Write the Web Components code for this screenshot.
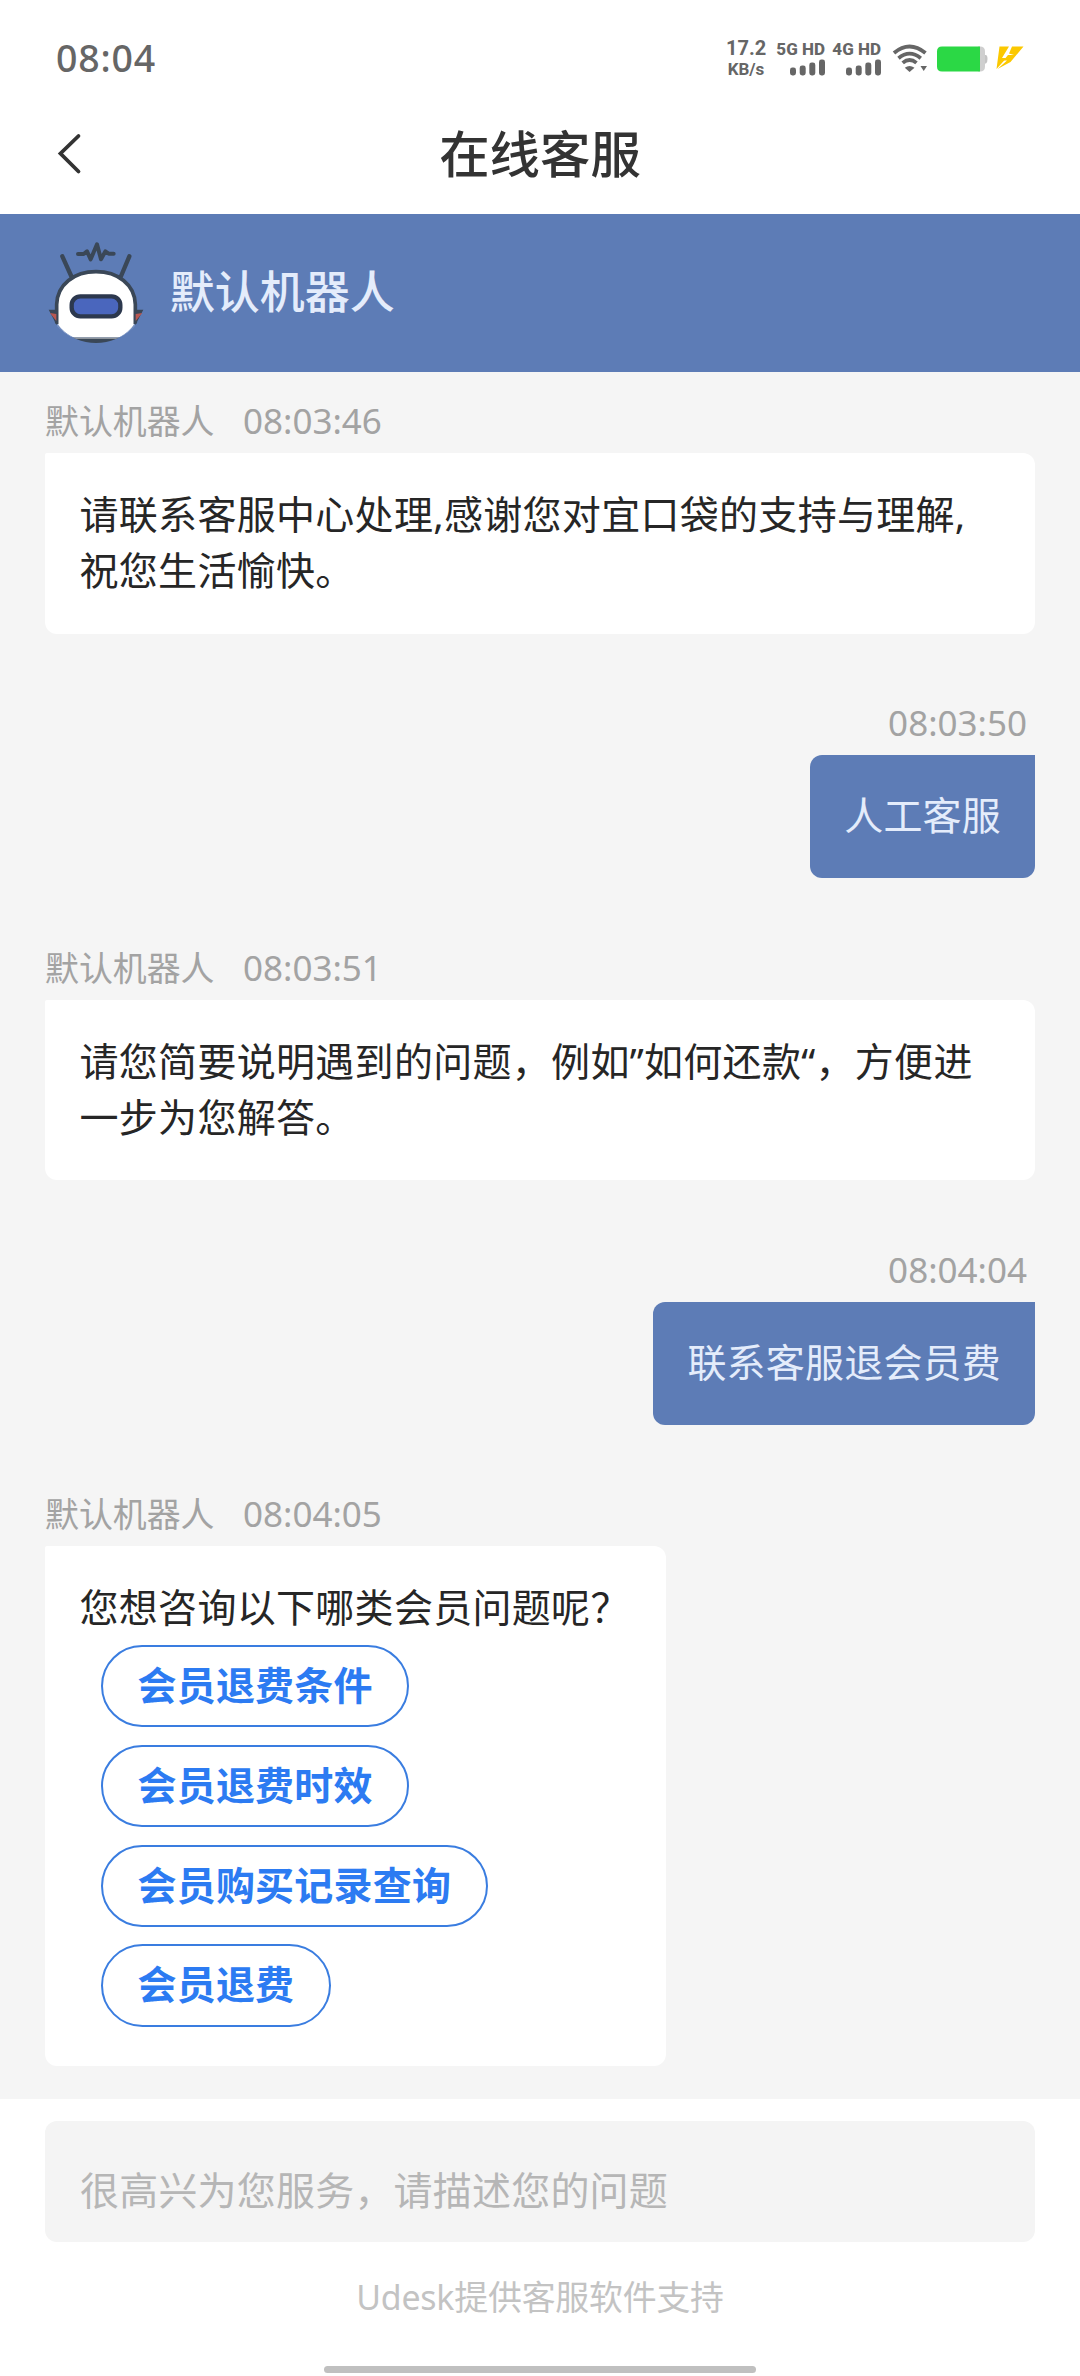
<!DOCTYPE html>
<html lang="zh-CN">
<head>
  <meta charset="UTF-8">
  <meta name="viewport" content="width=device-width, initial-scale=1.0">
  <title>在线客服</title>
  <style>
    body{
      margin: 0;
      font-family: "Noto Sans", "Noto Sans CJK SC", sans-serif;
      background-color: #fff;
    }
  </style>
</head>
<body>
  <template id="status-bar">
    <style>
      :host{
        display: flex;
        align-items: center;
        box-sizing: border-box;
        height: 96px;
        padding: 20px 56px 0 56px;
        color: #666;
      }
      .time{
        flex: 1;
        font-size: 37.5px;
        font-weight: 500;
        line-height: 38px;
        letter-spacing: 0.8px;
      }
      .speed{
        width: 40px;
        margin-right: 11px;
        font-family: Roboto, "Noto Sans", sans-serif;
        font-weight: 700;
        text-align: center;
      }
      .speed span{
        display: block;
        font-size: 20px;
        line-height: 22px;
      }
      .speed span + span{
        font-size: 17px;
        line-height: 20px;
      }
      .sim{
        display: flex;
        flex-direction: column;
        align-items: flex-end;
        width: 48px;
        margin-right: 8px;
        font-family: Roboto, "Noto Sans", sans-serif;
        font-size: 17px;
        font-weight: 800;
        line-height: 18px;
        white-space: nowrap;
      }
      svg{
        display: block;
        flex: none;
      }
      .sim svg{
        margin-top: 1px;
      }
    </style>
    <div class="time">08:04</div>
    <div class="speed"><span>17.2</span><span>KB/s</span></div>
    <div class="sim">
      <span>5G HD</span>
      <svg width="35" height="17" fill="#666">
        <rect x="0" y="8.5" width="6" height="8" rx="2.4"/>
        <rect x="9.7" y="6.5" width="6" height="10" rx="2.4"/>
        <rect x="19.3" y="3.5" width="6" height="13" rx="2.4"/>
        <rect x="29" y="0.5" width="6" height="16" rx="2.4"/>
      </svg>
    </div>
    <div class="sim">
      <span>4G HD</span>
      <svg width="35" height="17" fill="#666">
        <rect x="0" y="8.5" width="6" height="8" rx="2.4"/>
        <rect x="9.7" y="6.5" width="6" height="10" rx="2.4"/>
        <rect x="19.3" y="3.5" width="6" height="13" rx="2.4"/>
        <rect x="29" y="0.5" width="6" height="16" rx="2.4"/>
      </svg>
    </div>
    <!-- wifi, battery, charging -->
    <svg width="135" height="30" viewBox="889 43.5 135 30">
      <g fill="none" stroke="#666" stroke-width="3.8">
        <path d="M894 53.5Q909.5 40.5 925.5 53.5"/>
        <path d="M898.5 58.7Q909.5 49.5 920.8 58.7"/>
        <path d="M902.7 63.4Q909.5 57.5 916.5 63.4"/>
      </g>
      <path d="M904.8 68.3Q909.5 64.8 914.5 68.3L909.6 72.5Z" fill="#666"/>
      <path d="M920.5 66.5H927L923.7 71.5Z" fill="#666"/>
      <path d="M978 47H980Q985 47 985 52V67Q985 72 980 72H978Z" fill="#cfcfcf"/>
      <path d="M985 55.5H986Q987.5 56 987.5 59.5T986 64H985Z" fill="#c4c4c4"/>
      <path d="M942 47H980V72H942Q937 72 937 67V52Q937 47 942 47Z" fill="#2bd845"/>
      <path d="M999.5 47H1009L1002 58.5H1006.5L996.5 69.5Z" fill="#fbc800"/>
      <path d="M1012 47H1023.5L1010.5 62.5L997.5 69.5L1007 61H1003.5L1008 55.5H1014L1009 54Z" fill="#fbc800"/>
    </svg>
  </template>

  <template id="nav-bar">
    <style>
      :host{
        display: grid;
        grid-template-columns: 100px 1fr 100px;
        align-items: center;
        box-sizing: border-box;
        height: 118px;
        padding-bottom: 3px;
        color: #333;
      }
      svg{
        margin-left: 56px;
      }
      h1{
        margin: 0;
        font-size: 50.4px;
        font-weight: 500;
        line-height: 115px;
        text-align: center;
      }
    </style>
    <svg width="28" height="44" viewBox="0 0 28 44">
      <path d="M22.5 4L4.5 21.5L22.5 39.5" fill="none" stroke="#333" stroke-width="3.8" stroke-linecap="round"/>
    </svg>
    <h1><slot></slot></h1>
  </template>

  <template id="agent-banner">
    <style>
      :host{
        display: flex;
        align-items: center;
        box-sizing: border-box;
        height: 158px;
        padding: 0 43.7px 4px;
        background-color: #5d7cb6;
        color: #e4ecfb;
        font-size: 45px;
        font-weight: 500;
      }
      svg{
        flex: none;
        margin-right: 22px;
      }
      slot{
        display: block;
        padding-bottom: 3px;
      }
    </style>
    <svg width="104" height="104" viewBox="131 116 312 312">
      <clipPath id="round"><circle cx="287" cy="272" r="156"/></clipPath>
      <g clip-path="url(#round)" stroke-linecap="round" stroke-linejoin="round">
        <path d="M186 168L214 230M387 168L361 230" stroke="#3a4757" stroke-width="13" fill="none"/>
        <path d="M233 161H250L260 153L271 177L290 132L302 177L315 153L325 160H340" stroke="#3a4757" stroke-width="12" fill="none"/>
        <path d="M130 412H444V430H130Z" fill="#3a4757"/>
        <path d="M169 410V312C171 252 222 214 287 214S403 252 405 312V410Z" fill="#fff"/>
        <path d="M169 372V312C171 252 222 214 287 214S403 252 405 312V372" fill="none" stroke="#3a4757" stroke-width="11" stroke-linecap="butt"/>
        <rect x="214" y="288" width="146" height="60" rx="26" fill="#4a66bd" stroke="#2c384e" stroke-width="13"/>
        <path d="M200 413H374" stroke="#a9aeb4" stroke-width="5"/>
        <path d="M120 360L172 372Q190 398 224 414L180 430H120ZM454 360L402 372Q384 398 352 414L400 430H454Z" fill="#5d7cb6"/>
        <path d="M145 328H170V376ZM429 328H404V376Z" fill="#3a4757"/>
        <path d="M149 338L168 341V362ZM426 338L406 341V362Z" fill="#b95852"/>
      </g>
    </svg>
    <slot></slot>
  </template>

  <template id="chat-list">
    <style>
      :host{
        display: flex;
        flex-direction: column;
        gap: 67.5px;
        box-sizing: border-box;
        height: 1727px;
        padding: 27px 45px 0;
        background-color: #f5f5f5;
      }
    </style>
    <slot></slot>
  </template>

  <template id="chat-message">
    <style>
      :host{
        display: flex;
        flex-direction: column;
        align-items: flex-start;
      }
      .meta{
        display: flex;
        gap: 28.5px;
        height: 44px;
        margin-bottom: 10px;
        color: #a3a3a3;
        line-height: 44px;
      }
      .name{
        font-size: 33.9px;
      }
      .time{
        font-size: 35px;
      }
      .bubble{
        box-sizing: border-box;
        padding: 33px 36px 35.5px 34.5px;
        border-radius: 2px 12px 12px 12px;
        background-color: #fff;
        color: #262626;
        font-size: 39px;
        line-height: 56px;
        letter-spacing: 0.3px;
      }
      :host([from="robot"]) .bubble{
        min-width: 619px;
      }
      :host([from="user"]){
        align-items: flex-end;
      }
      :host([from="user"]) .name{
        display: none;
      }
      :host([from="user"]) .meta{
        padding-right: 8px;
      }
      :host([from="user"]) .bubble{
        padding: 32px 34px 35px;
        border-radius: 12px 0 12px 12px;
        background-color: #5d7cb6;
        color: #e4ecfb;
        letter-spacing: 0.2px;
      }
    </style>
    <div class="meta"><span class="name">默认机器人</span><span class="time"></span></div>
    <div class="bubble"><slot></slot></div>
  </template>

  <template id="option-list">
    <style>
      :host{
        display: flex;
        flex-direction: column;
        align-items: flex-start;
        gap: 17.5px;
        padding: 10px 0 4px 21.5px;
      }
    </style>
    <slot></slot>
  </template>

  <template id="option-pill">
    <style>
      :host{
        display: block;
        box-sizing: border-box;
        height: 82.3px;
        padding: 0 34.5px;
        border: 2px solid #3a7de0;
        border-radius: 42px;
        color: #2c7bf2;
        font-weight: 700;
        line-height: 75px;
        letter-spacing: 0.2px;
      }
    </style>
    <slot></slot>
  </template>

  <template id="chat-footer">
    <style>
      :host{
        display: flex;
        flex-direction: column;
        align-items: center;
        box-sizing: border-box;
        height: 277px;
        padding: 22px 45px 0;
      }
      .input{
        box-sizing: border-box;
        width: 100%;
        height: 120.5px;
        padding: 9px 35px;
        border-radius: 12px;
        background-color: #f4f4f4;
        color: #b6b6b6;
        font-size: 39px;
        line-height: 120px;
        letter-spacing: 0.2px;
      }
      .support{
        margin-top: 30px;
        color: #c3c3c3;
        font-size: 33.9px;
        line-height: 50px;
        letter-spacing: -0.2px;
      }
      .home{
        width: 432px;
        height: 7px;
        margin-top: 44.5px;
        border-radius: 4px;
        background-color: #c0c0c0;
      }
    </style>
    <div class="input"><slot name="placeholder"></slot></div>
    <div class="support"><slot></slot></div>
    <div class="home"></div>
  </template>

  <status-bar></status-bar>
  <nav-bar>在线客服</nav-bar>
  <agent-banner>默认机器人</agent-banner>
  <chat-list>
    <chat-message from="robot" time="08:03:46">请联系客服中心处理,感谢您对宜口袋的支持与理解,祝您生活愉快。</chat-message>
    <chat-message from="user" time="08:03:50">人工客服</chat-message>
    <chat-message from="robot" time="08:03:51">请您简要说明遇到的问题，例如”如何还款“，方便进一步为您解答。</chat-message>
    <chat-message from="user" time="08:04:04">联系客服退会员费</chat-message>
    <chat-message from="robot" time="08:04:05">您想咨询以下哪类会员问题呢？
      <option-list>
        <option-pill>会员退费条件</option-pill>
        <option-pill>会员退费时效</option-pill>
        <option-pill>会员购买记录查询</option-pill>
        <option-pill>会员退费</option-pill>
      </option-list>
    </chat-message>
  </chat-list>
  <chat-footer>
    <span slot="placeholder">很高兴为您服务，请描述您的问题</span>
    Udesk提供客服软件支持
  </chat-footer>

  <script>
    class BaseElement extends HTMLElement {
      constructor() {
        super()
        const shadowRoot = this.attachShadow({ mode: 'open' })
        const template = document.querySelector('#' + this.localName)
        shadowRoot.appendChild(template.content.cloneNode(true))
      }
    }

    class ChatMessage extends BaseElement {
      static get observedAttributes(){
        return ['time']
      }
      attributeChangedCallback(attrName, oldVal, newVal){
        this.shadowRoot.querySelector('.time').textContent = newVal
      }
    }

    customElements.define('status-bar', class extends BaseElement {})
    customElements.define('nav-bar', class extends BaseElement {})
    customElements.define('agent-banner', class extends BaseElement {})
    customElements.define('chat-list', class extends BaseElement {})
    customElements.define('chat-message', ChatMessage)
    customElements.define('option-list', class extends BaseElement {})
    customElements.define('option-pill', class extends BaseElement {})
    customElements.define('chat-footer', class extends BaseElement {})
  </script>
</body>
</html>
